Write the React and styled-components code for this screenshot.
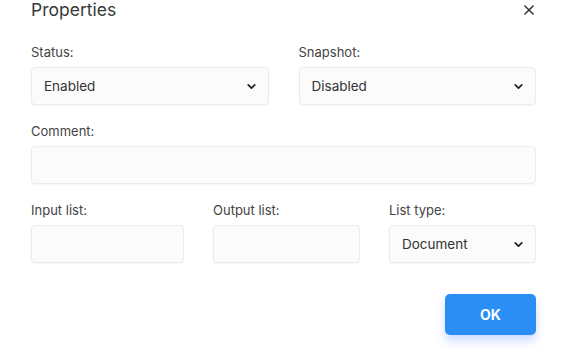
import styled, { createGlobalStyle } from "styled-components";

const GlobalStyle = createGlobalStyle`
    body {
        margin: 0;
        background: #fff;
        font-family: Inter, "Noto Sans", sans-serif;
    }
`;

const Chevron = () => (
    <svg width="13" height="13" viewBox="0 0 24 24" fill="none" stroke="#222" strokeWidth="3.2" strokeLinecap="round" strokeLinejoin="round">
        <path d="M6 9l6 6 6-6" />
    </svg>
);

const Close = () => (
    <svg width="14" height="14" viewBox="0 0 24 24" fill="none" stroke="#333" strokeWidth="2.6" strokeLinecap="round">
        <path d="M5 5l14 14M19 5L5 19" />
    </svg>
);

const Field = ({ label, value, select }) => (
    <FieldWrap>
        <Label>{label}</Label>
        <Box>
            {value && <Value>{value}</Value>}
            {select && <Chevron />}
        </Box>
    </FieldWrap>
);

const App = () => {
    return (
        <Dialog>
            <GlobalStyle />
            <Header>
                <Title>Properties</Title>
                <CloseBtn><Close /></CloseBtn>
            </Header>
            <TwoCol>
                <Field label="Status:" value="Enabled" select />
                <Field label="Snapshot:" value="Disabled" select />
            </TwoCol>
            <Field label="Comment:" />
            <ThreeCol>
                <Field label="Input list:" />
                <Field label="Output list:" />
                <Field label="List type:" value="Document" select />
            </ThreeCol>
            <Footer>
                <OkBtn>OK</OkBtn>
            </Footer>
        </Dialog>
    )
}

const Dialog = styled.div`
    width: 568px;
    height: 350px;
    box-sizing: border-box;
    padding: 0 32px 0 31px;
    display: flex;
    flex-direction: column;
    gap: 18px;
`;
const Header = styled.div`
    display: flex;
    justify-content: space-between;
    align-items: center;
    height: 20px;
    margin-bottom: 6px;
`;
const Title = styled.div`
    font-size: 17.5px;
    color: #383838;
    line-height: 20px;
`;
const CloseBtn = styled.div`
    display: flex;
    margin-right: 0;
`;
const TwoCol = styled.div`
    display: grid;
    grid-template-columns: 1fr 1fr;
    column-gap: 30px;
`;
const ThreeCol = styled.div`
    display: grid;
    grid-template-columns: 153px 147px 1fr;
    column-gap: 29px;
`;
const FieldWrap = styled.div`
    display: flex;
    flex-direction: column;
    gap: 7px;
`;
const Label = styled.div`
    font-size: 13px;
    line-height: 16px;
    color: #444;
`;
const Box = styled.div`
    height: 38px;
    box-sizing: border-box;
    background: #fbfbfb;
    border: 1px solid #ececec;
    border-radius: 4px;
    box-shadow: 0 1px 2px rgba(0, 0, 0, 0.04);
    display: flex;
    align-items: center;
    justify-content: space-between;
    padding: 0 10px 0 12px;
`;
const Value = styled.span`
    font-size: 13.5px;
    color: #333;
`;
const Footer = styled.div`
    display: flex;
    justify-content: flex-end;
    margin-top: 13px;
`;
const OkBtn = styled.button`
    width: 91px;
    height: 41px;
    border: none;
    border-radius: 5px;
    background: #2a8ef4;
    color: #fff;
    font-family: Inter, sans-serif;
    font-weight: 700;
    font-size: 14px;
    box-shadow: 0 6px 10px rgba(60, 110, 255, 0.25);
`;

export default App;
